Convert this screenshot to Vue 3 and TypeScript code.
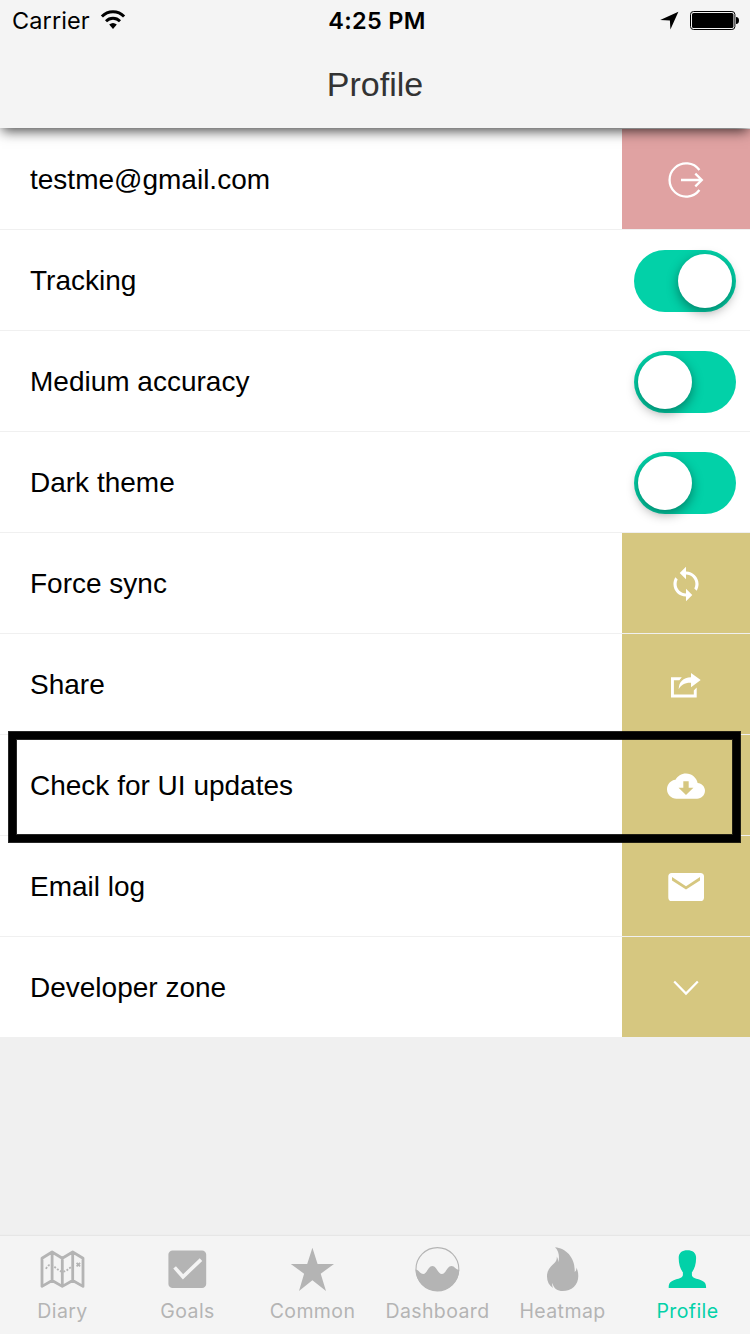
<script setup lang="ts">
type RowKind = 'logout' | 'on' | 'off' | 'sync' | 'share' | 'cloud' | 'mail' | 'chevron'

interface Row {
  label: string
  kind: RowKind
  marked?: boolean
}

const rows: Row[] = [
  { label: 'testme@gmail.com', kind: 'logout' },
  { label: 'Tracking', kind: 'on' },
  { label: 'Medium accuracy', kind: 'off' },
  { label: 'Dark theme', kind: 'off' },
  { label: 'Force sync', kind: 'sync' },
  { label: 'Share', kind: 'share' },
  { label: 'Check for UI updates', kind: 'cloud', marked: true },
  { label: 'Email log', kind: 'mail' },
  { label: 'Developer zone', kind: 'chevron' },
]

const tabs: string[] = ['Diary', 'Goals', 'Common', 'Dashboard', 'Heatmap', 'Profile']

const isToggle = (kind: RowKind): boolean => kind === 'on' || kind === 'off'
</script>

<template>
  <div class="screen">
    <header class="header">
      <div class="status">
        <div class="status-left">
          <span class="carrier">Carrier</span>
          <svg class="wifi" width="26" height="20" viewBox="0 0 26 20">
            <path d="M1.9 6.5A15.4 15.4 0 0 1 24.1 6.5" fill="none" stroke="#000" stroke-width="3" />
            <path d="M6 11.2A9.8 9.8 0 0 1 20 11.2" fill="none" stroke="#000" stroke-width="2.8" />
            <path d="M9.2 14.6Q13 11.6 16.8 14.6L13 19Z" />
          </svg>
        </div>
        <span class="clock">4:25 PM</span>
        <div class="status-right">
          <svg width="20" height="20" viewBox="0 0 20 20">
            <path d="M18.4 1.8L10.4 19.6L9.9 10.6L.2 9.9Z" />
          </svg>
          <svg class="battery" width="50" height="20" viewBox="0 0 50 20">
            <rect x=".5" y="1.5" width="44.4" height="18" rx="3" fill="none" stroke="#000" />
            <rect x="2" y="3" width="41.4" height="15" rx="1.6" />
            <path d="M46 7C48.2 7 49 8.5 49 10.5S48.2 14 46 14Z" />
          </svg>
        </div>
      </div>
      <h1 class="title">Profile</h1>
    </header>

    <main class="list">
      <div v-for="row in rows" :key="row.label" class="row">
        <span class="label">{{ row.label }}</span>
        <div v-if="isToggle(row.kind)" class="toggle" :class="{ on: row.kind === 'on' }">
          <i class="knob"></i>
        </div>
        <div v-else class="action" :class="{ danger: row.kind === 'logout' }">
          <svg width="44" height="44" viewBox="0 0 44 44">
            <g v-if="row.kind === 'logout'" fill="none" stroke="#fff" stroke-width="2.3">
              <path d="M35.4 13A16.6 16.6 0 1 0 35.4 33" />
              <path d="M17 23H38M31.3 16.6L37.8 23L31.3 29.4" />
            </g>
            <path
              v-else-if="row.kind === 'sync'"
              transform="translate(3.16 4.16) scale(1.57)"
              d="M12 4V1L8 5l4 4V6c3.31 0 6 2.69 6 6 0 1.01-.25 1.97-.7 2.8l1.46 1.46C19.54 15.03 20 13.57 20 12c0-4.42-3.58-8-8-8zm0 14c-3.31 0-6-2.69-6-6 0-1.01.25-1.97.7-2.8L5.24 7.74C4.46 8.97 4 10.43 4 12c0 4.42 3.58 8 8 8v3l4-4-4-4v3z"
            />
            <g v-else-if="row.kind === 'share'">
              <path d="M7 15.3H17.8L15.4 18.3H9.9V32.6H29.8V28.6L32.7 25.5V35.4H7Z" />
              <path d="M27 11L36.7 18L27 25.3V20.8C20.5 20.6 17 23 14.7 27.3C14.9 20 19 15.7 27 15.3Z" />
            </g>
            <path
              v-else-if="row.kind === 'cloud'"
              transform="translate(3 4.1) scale(1.583)"
              d="M19.35 10.04C18.67 6.59 15.64 4 12 4 9.11 4 6.6 5.64 5.35 8.04 2.34 8.36 0 10.91 0 14c0 3.31 2.69 6 6 6h13c2.76 0 5-2.24 5-5 0-2.64-2.05-4.78-4.65-4.96zM16.7 13L12 17.7 7.3 13h3V9h3.4v4z"
            />
            <path
              v-else-if="row.kind === 'mail'"
              fill-rule="evenodd"
              d="M8 9H36.4A3.6 3.6 0 0 1 40 12.6V33.4A3.6 3.6 0 0 1 36.4 37H8A3.6 3.6 0 0 1 4.3 33.4V12.6A3.6 3.6 0 0 1 8 9ZM8 13V16.4L22 25.4L36 16.4V13L22 22.2Z"
            />
            <path v-else d="M10.2 16.5L22 28.6L33.8 16.5" fill="none" stroke="#fff" stroke-width="2.2" />
          </svg>
        </div>
        <div v-if="row.marked" class="marker"></div>
      </div>
    </main>

    <nav class="tabs">
      <div v-for="tab in tabs" :key="tab" class="tab" :class="{ active: tab === 'Profile' }">
        <svg width="49" height="48" viewBox="0 0 49 48" fill="currentColor">
          <g v-if="tab === 'Diary'" fill="none" stroke="currentColor" stroke-linejoin="round">
            <path
              stroke-width="2.8"
              d="M4 14.3L14.1 8L24.3 14.3L34.7 8L45 14.3V42.4L34.7 36.5L24.3 42.4L14.1 36.5L4 42.4ZM14.1 8V36.5M24.3 14.3V42.4M34.7 8V36.5"
            />
            <path
              stroke-width="1.9"
              stroke-dasharray="1.9 1.6"
              d="M8 24.8C10 20.5 12.5 20 15.5 22.2C19 24.6 21.5 27.7 25.3 27.7C29 27.5 31 23.5 35.5 22"
            />
            <path stroke-width="1.8" d="M38.6 18.9L42.1 22.4M42.1 18.9L38.6 22.4" />
          </g>
          <g v-else-if="tab === 'Goals'">
            <rect x="5.4" y="6.5" width="37.8" height="37.6" rx="4.2" />
            <path d="M11.6 23.4L20 32.8L38 15.6" fill="none" stroke="#f4f4f4" stroke-width="3.6" />
          </g>
          <path
            v-else-if="tab === 'Common'"
            d="M24.4 3.8L29.6 20H46L32.7 29.7L38 47L24.4 36.3L11 47L16.1 29.7L2.8 20H19.2Z"
          />
          <g v-else-if="tab === 'Dashboard'">
            <circle cx="24.4" cy="25" r="21.4" fill="none" stroke="currentColor" stroke-width="1.1" />
            <path
              d="M2.6 25.5C5.5 25.5 7 30 10.2 30C13.8 30 15.4 22 19.4 22C23.4 22 25 30 28.8 30C32.8 30 34.3 22 38.4 22C41.4 22 43 25.8 46.2 26A21.8 21.8 0 0 1 2.6 25.5Z"
            />
          </g>
          <path
            v-else-if="tab === 'Heatmap'"
            d="M17 3.3C28 4 37.5 14 36.7 28C38.1 27 38.5 25.5 38.3 23.5C39.8 26 40.3 29 40.3 32C40.3 41 33.5 47 24.7 47C19.5 47 16 45 14.3 39C14 41 14.3 42.5 15 44C11 41.5 9 37.5 9 32.5C9 25.5 13 22.5 16.2 19.2C18.2 17.2 19.1 15 18.7 12.5C19.7 14 20.3 16 20.3 18.3C21.8 12.5 20.8 7 17 3.3Z"
          />
          <path
            v-else
            d="M24.4 6.3C29.6 6.3 33.2 8.8 33.1 14C33.1 20 31.5 25 28.9 28.3V31C29 33.4 32 34.2 36.2 35.6C41.8 37.5 43.2 39.5 43.1 44H5.7C5.6 39.5 7 37.5 12.6 35.6C16.8 34.2 19.8 33.4 19.9 31V28.3C17.3 25 15.7 20 15.7 14C15.6 8.8 19.2 6.3 24.4 6.3Z"
          />
        </svg>
        <span class="tab-label">{{ tab }}</span>
      </div>
    </nav>
  </div>
</template>

<style>
body {
  margin: 0;
}
</style>

<style scoped>
.screen {
  display: flex;
  flex-direction: column;
  width: 750px;
  height: 1334px;
  overflow: hidden;
  background: #f0f0f0;
  color: #000;
  font-family: 'Liberation Sans', Arial, sans-serif;
}
.header {
  position: relative;
  z-index: 1;
  flex: none;
  height: 128px;
  background: #f4f4f4;
  box-shadow: 0 5px 12px -2px rgba(0, 0, 0, 0.72);
}
.status {
  display: grid;
  grid-template-columns: 1fr auto 1fr;
  align-items: center;
  height: 40px;
  padding: 0 10px 0 12px;
  font-family: Inter, sans-serif;
  font-size: 23.5px;
  line-height: 38px;
}
.status-left,
.status-right {
  display: flex;
  align-items: center;
}
.status-right {
  justify-content: flex-end;
  gap: 10px;
}
.carrier {
  padding-top: 2px;
  letter-spacing: 0.1px;
}
.wifi {
  margin-left: 10px;
}
.clock {
  padding: 2px 0 0 2px;
  font-weight: 600;
  letter-spacing: 0.3px;
}
.title {
  margin: 0;
  padding-top: 22px;
  color: #333;
  font-size: 34px;
  font-weight: 400;
  line-height: 44px;
  text-align: center;
}
.list {
  flex: none;
  padding-top: 1px;
  background: #fff;
}
.row {
  position: relative;
  display: flex;
  align-items: center;
  height: 100px;
  border-bottom: 1px solid #f0f0f0;
}
.row:last-child {
  border-bottom: 0;
}
.label {
  flex: 1;
  padding: 2px 0 0 30px;
  font-size: 28px;
  line-height: 36px;
}
.action {
  display: flex;
  align-items: center;
  justify-content: center;
  width: 128px;
  height: 100px;
  background: #d6c780;
  fill: #fff;
}
.action.danger {
  background: #e0a2a2;
}
.toggle {
  display: flex;
  box-sizing: border-box;
  width: 102px;
  height: 62px;
  margin: 2px 14px 0 0;
  padding: 4px;
  border-radius: 31px;
  background: #02d1a8;
}
.toggle.on {
  justify-content: flex-end;
}
.knob {
  width: 54px;
  height: 54px;
  border-radius: 50%;
  background: #fff;
  box-shadow: 0 4px 12px rgba(0, 0, 0, 0.4);
}
.marker {
  position: absolute;
  z-index: 1;
  top: -3px;
  left: 9px;
  box-sizing: border-box;
  width: 731px;
  height: 110px;
  border: 7px solid #000;
  box-shadow: 0 0 0 1px rgba(0, 0, 0, 0.85), inset 0 0 0 1px rgba(0, 0, 0, 0.85);
}
.tabs {
  display: flex;
  flex: none;
  height: 98px;
  margin-top: auto;
  background: #f4f4f4;
  box-shadow: 0 -1px 1px #e6e6e6;
}
.tab {
  display: flex;
  flex: 1;
  flex-direction: column;
  align-items: center;
  padding-top: 8px;
  color: #b4b4b4;
}
.tab.active {
  color: #02d1a8;
}
.tab-label {
  margin-top: 6px;
  font-family: Inter, sans-serif;
  font-size: 19.5px;
  line-height: 26px;
  letter-spacing: 0.4px;
}
</style>
